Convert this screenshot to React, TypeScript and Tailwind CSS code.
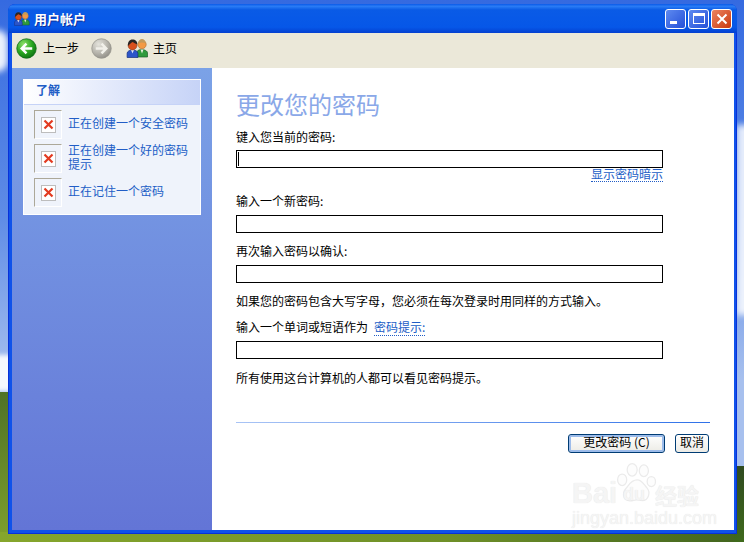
import type { ReactNode } from "react";

const cjk = "font-['Noto_Sans_CJK_SC','Liberation_Sans',sans-serif]";

function UsersIcon({ className }: { className?: string }) {
  return (
    <svg viewBox="0 0 22 20" className={className}>
      {/* right person */}
      <path d="M10 19v-4c0-2 2-3.500 5-3.500s6 1.500 6 3.500v4z" fill="#2f9a3c" stroke="#1b5e28" strokeWidth="0.7" />
      <path d="M14 11.500h3l-1.500 4z" fill="#e8efe0" />
      <circle cx="15.500" cy="6.500" r="4.200" fill="#f39a45" stroke="#b0692a" strokeWidth="0.6" />
      <path d="M11.500 5.500c.5-3 2-4.500 4-4.500s3.500 1.500 4 4.500c-2.500-1.500-5.500-1.500-8 0z" fill="#c49a5a" />
      {/* left person */}
      <path d="M0.600 19.500v-4c0-2.200 2.400-3.500 5.400-3.500s5.400 1.300 5.400 3.500v4z" fill="#2d55c9" stroke="#17307e" strokeWidth="0.7" />
      <path d="M4.500 12h3l-1.500 3.500z" fill="#dfe6f7" />
      <circle cx="6" cy="7.500" r="4.400" fill="#d9501c" stroke="#7a2c0e" strokeWidth="0.5" />
      <path d="M1.500 8c-.5-4 1.500-6.500 4.500-6.500s5 2 4.800 5c-2-.8-3.500-2-4.800-2.500-1.500 1-3 2-4.500 4z" fill="#2a2522" />
    </svg>
  );
}

function RoundArrow({ disabled, id }: { disabled?: boolean; id: string }) {
  return (
    <svg viewBox="0 0 22 22" className="h-[21px] w-[21px]">
      <defs>
        <radialGradient id={id} cx="35%" cy="28%" r="80%">
          <stop offset="0%" stopColor={disabled ? "#e4e3dc" : "#8fe06a"} />
          <stop offset="55%" stopColor={disabled ? "#b8b6ae" : "#28a51f"} />
          <stop offset="100%" stopColor={disabled ? "#8d8b84" : "#0b6d12"} />
        </radialGradient>
      </defs>
      <circle cx="11" cy="11" r="10.200" fill={`url(#${id})`} stroke={disabled ? "#96948c" : "#0f6a17"} strokeWidth="0.8" />
      {disabled ? (
        <path d="M5 11h10.500M11 6l5 5-5 5" fill="none" stroke="#f1f0ea" strokeWidth="2.600" />
      ) : (
        <path d="M17 11H6.500M11 6l-5 5 5 5" fill="none" stroke="#fff" strokeWidth="2.600" />
      )}
    </svg>
  );
}

function WinButton({ className, children }: { className: string; children: ReactNode }) {
  return (
    <div className={`flex h-[20px] w-[21px] items-center justify-center rounded-[3px] border border-white ${className}`}>
      {children}
    </div>
  );
}

function BrokenImage() {
  return (
    <div className="flex h-[29px] w-[28px] shrink-0 items-center justify-center border-t-[1.5px] border-l-[1.5px] border-r border-b border-t-[#aca899] border-l-[#aca899] border-r-white border-b-white">
      <div className="flex h-[16px] w-[15px] items-center justify-center border border-[#bdbdbd] bg-white">
        <svg viewBox="0 0 11 11" className="h-[11px] w-[11px]">
          <path d="M1.500 1.500l8 8M9.500 1.500l-8 8" stroke="#e23a20" strokeWidth="2.200" />
        </svg>
      </div>
    </div>
  );
}

function HelpItem({ children }: { children: ReactNode }) {
  return (
    <div className="flex h-[29px] items-center gap-[6px]">
      <BrokenImage />
      <span className="-mt-[4px] w-[122px] text-[12px] leading-[14px] text-[#215dc6]">{children}</span>
    </div>
  );
}

function Label({ className, children }: { className: string; children: ReactNode }) {
  return <div className={`h-[14px] text-[12px] leading-[14px] text-black ${className}`}>{children}</div>;
}

function TextBox({ caret }: { caret?: boolean }) {
  return (
    <div className="mt-[7px] flex h-[18px] w-[427px] items-center border-[1.5px] border-black bg-white pl-px">
      {caret && <div className="h-[14px] w-px bg-black" />}
    </div>
  );
}

function Watermark() {
  return (
    <div className="pointer-events-none absolute top-[462px] left-[572px] h-[66px] w-[134px] select-none text-[#f5f5f5] [text-shadow:0_0_1px_#e0e0e0]">
      <svg viewBox="0 0 60 50" className="absolute top-0 left-[41px] h-[44px] w-[50px]" fill="#fdfdfd" stroke="#ebebeb" strokeWidth="1.500">
        <ellipse cx="11" cy="20" rx="5.500" ry="7" />
        <ellipse cx="23" cy="8" rx="6" ry="7.500" />
        <ellipse cx="37" cy="9" rx="5.500" ry="7" />
        <ellipse cx="46" cy="22" rx="5" ry="6" />
        <path d="M29 20c6 0 8 6 12 10 4 5 2 15-6 15-3 0-4-1-7-1s-5 2-9 1c-7-1-8-9-4-14 4-4 6-11 14-11z" />
      </svg>
      <div className="absolute top-[16px] left-0 font-['Liberation_Sans',sans-serif] text-[29px] leading-[30px] font-bold">Bai</div>
      <div className="absolute top-[22px] left-[51px] font-['Liberation_Sans',sans-serif] text-[18px] leading-[20px] font-bold">du</div>
      <div className="absolute top-[19px] left-[83px] text-[22px] leading-[26px] font-bold whitespace-nowrap">经验</div>
      <div className="absolute top-[47px] left-0 font-['Liberation_Sans',sans-serif] text-[18px] leading-[18px] whitespace-nowrap">jingyan.baidu.com</div>
    </div>
  );
}

export default function App() {
  return (
    <div className={`relative h-[542px] w-[744px] overflow-hidden bg-[linear-gradient(to_bottom,#356ae0_0%,#5f8ce6_40%,#a7c0ee_70%,#a7c0ee_100%)] pt-[4px] pl-[8px] ${cjk}`}>
      {/* desktop wallpaper behind the window */}
      <div className="absolute top-[30px] left-[-14px] h-[42px] w-[22px] rounded-full bg-white/90 blur-[3px]" />
      <div className="absolute top-[355px] left-[-10px] h-[36px] w-[30px] bg-white/90 blur-[2px]" />
      <div className="absolute top-[125px] right-[-8px] h-[190px] w-[16px] bg-white/85 blur-[3px]" />
      <div className="absolute bottom-0 left-0 h-[150px] w-[12px] bg-[linear-gradient(to_bottom,#4f7226,#7fa02c)]" />
      <div className="absolute right-0 bottom-0 left-0 h-[10px] bg-[linear-gradient(to_right,#86a62c,#6f9028_60%,#41641e)]" />
      <div className="absolute right-0 bottom-0 h-[76px] w-[10px] bg-[linear-gradient(to_bottom,#2f4a20,#3f6a1c)]" />

      <div className="relative flex h-[530px] w-[729px] flex-col rounded-t-[7px] bg-[#0831d9]">
        {/* title bar */}
        <div className="flex h-[29px] shrink-0 items-center rounded-t-[7px] bg-[linear-gradient(to_bottom,#0a5ae8_0%,#2a7cf5_8%,#0a5be6_20%,#0657e8_80%,#0440d0_100%)] pr-[5px] pl-[6px]">
          <UsersIcon className="h-[15px] w-[16px]" />
          <span className="mt-px ml-[4px] text-[13px] font-bold text-white [text-shadow:1px_1px_0_#0a2f9e]">用户帐户</span>
          <div className="ml-auto flex gap-[2px]">
            <WinButton className="bg-[linear-gradient(135deg,#5e8af0,#2450d8)]">
              <div className="mt-[8px] mr-[4px] h-[3px] w-[7px] bg-white" />
            </WinButton>
            <WinButton className="bg-[linear-gradient(135deg,#5e8af0,#2450d8)]">
              <div className="h-[11px] w-[12px] border border-t-[3px] border-white" />
            </WinButton>
            <WinButton className="bg-[linear-gradient(135deg,#ec8460,#c9390f)]">
              <svg viewBox="0 0 12 12" className="h-[12px] w-[12px]">
                <path d="M1.500 1.500l9 9M10.500 1.500l-9 9" stroke="#fff" strokeWidth="2" />
              </svg>
            </WinButton>
          </div>
        </div>

        {/* frame */}
        <div className="flex min-h-0 flex-1 flex-col border-x border-b border-[#0831d9]">
          <div className="flex min-h-0 flex-1 flex-col border-r-[2px] border-b-[3px] border-l-[3px] border-[#0f52ea]">
            {/* toolbar */}
            <div className="flex h-[35px] shrink-0 items-center bg-[#ebe8d9] pb-[5px] pl-[4px] text-[12px] text-black">
              <RoundArrow id="back-arrow" />
              <span className="ml-[6px]">上一步</span>
              <div className="ml-[12px] flex">
                <RoundArrow id="forward-arrow" disabled />
              </div>
              <UsersIcon className="ml-[14px] h-[20px] w-[23px]" />
              <span className="ml-[4px]">主页</span>
            </div>

            <div className="flex min-h-0 flex-1">
              {/* left task pane */}
              <div className="w-[200px] shrink-0 bg-[linear-gradient(to_bottom,#7ba2e7,#6375d6)] pt-[11px] pl-[11px]">
                <div className="h-[136px] w-[178px] border border-white bg-[#eff3fb]">
                  <div className="flex h-[25px] items-center border-b border-[#c6d3f7] bg-[linear-gradient(to_right,#ffffff,#c6d3f7)] pb-[4px] pl-[12px] text-[12px] font-bold text-[#215dc6]">
                    了解
                  </div>
                  <div className="flex flex-col gap-[5px] pt-[5px] pl-[10px]">
                    <HelpItem>正在创建一个安全密码</HelpItem>
                    <HelpItem>正在创建一个好的密码提示</HelpItem>
                    <HelpItem>正在记住一个密码</HelpItem>
                  </div>
                </div>
              </div>

              {/* form */}
              <div className="flex-1 bg-white pt-[25px] pr-[24px] pl-[24px]">
                <h1 className="h-[24px] text-[24px] leading-[22px] font-normal text-[#8aa8e8]">更改您的密码</h1>

                <Label className="mt-[12px] pt-px">键入您当前的密码:</Label>
                <TextBox caret />
                <div className="flex h-[16px] w-[427px] justify-end">
                  <span className="h-[14px] border-b border-dotted border-[#215dc6] text-[12px] leading-[11px] text-[#215dc6]">显示密码暗示</span>
                </div>

                <Label className="mt-[10px]">输入一个新密码:</Label>
                <TextBox />

                <Label className="mt-[11px]">再次输入密码以确认:</Label>
                <TextBox />

                <Label className="mt-[11px]">如果您的密码包含大写字母，您必须在每次登录时用同样的方式输入。</Label>

                <Label className="mt-[12px]">
                  输入一个单词或短语作为
                  <span className="ml-[6px] border-b border-dotted border-[#215dc6] text-[#215dc6]">密码提示:</span>
                </Label>
                <TextBox />

                <Label className="mt-[12px]">所有使用这台计算机的人都可以看见密码提示。</Label>

                <div className="mt-[37px] h-px bg-[linear-gradient(to_right,#a9c4f5,#2f71e8)]" />

                <div className="mt-[11px] flex justify-end gap-[10px] pr-px">
                  <button className="h-[19px] w-[97px] rounded-[3px] border border-[#003c74] bg-[linear-gradient(to_bottom,#ffffff,#ecebe5)] pb-[3px] text-[12px] leading-none text-black shadow-[inset_0_0_0_2px_#9dbcea]">
                    更改密码 (C)
                  </button>
                  <button className="h-[19px] w-[34px] rounded-[3px] border border-[#003c74] bg-[linear-gradient(to_bottom,#ffffff,#ecebe5)] pb-[3px] text-[12px] leading-none text-black">
                    取消
                  </button>
                </div>
              </div>
            </div>
          </div>
        </div>
      </div>

      <Watermark />
    </div>
  );
}
